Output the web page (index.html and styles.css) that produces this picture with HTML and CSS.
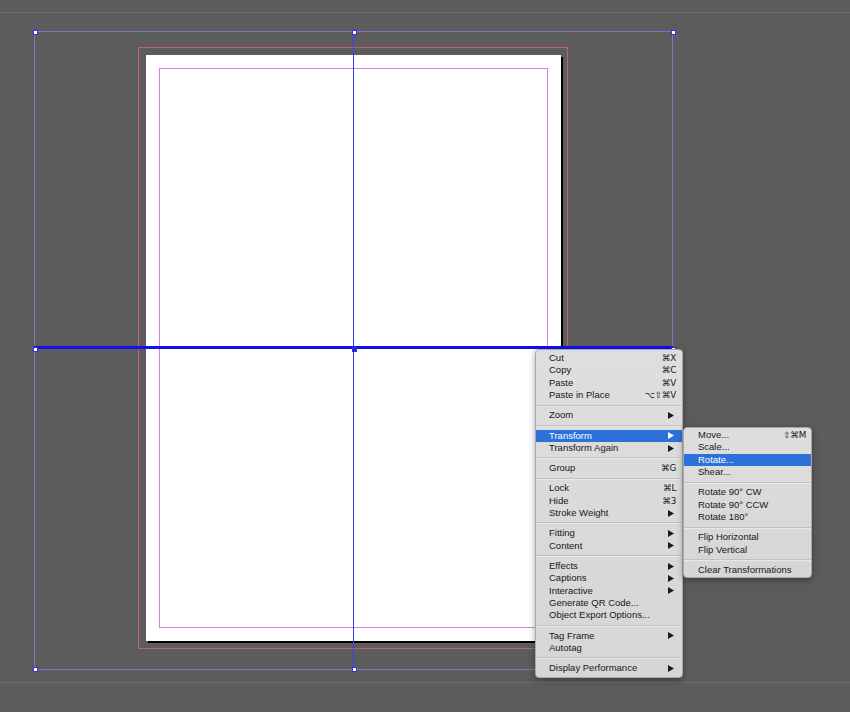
FILE: index.html
```html
<!DOCTYPE html>
<html>
<head>
<meta charset="utf-8">
<link rel="stylesheet" href="styles.css">
</head>
<body>
<div class="workspace">
  <div class="rule rule-top"></div>
  <div class="rule rule-bottom"></div>

  <div class="bleed"></div>
  <div class="page"></div>
  <div class="margins"></div>

  <div class="frame"></div>
  <div class="vline"></div>
  <div class="hline"></div>

  <div class="handle h-tl"></div>
  <div class="handle h-tc"></div>
  <div class="handle h-tr"></div>
  <div class="handle h-ml"></div>
  <div class="handle h-mc filled"></div>
  <div class="handle h-mr"></div>
  <div class="handle h-bl"></div>
  <div class="handle h-bc"></div>
  <div class="handle h-br"></div>

  <div class="menu main-menu">
    <div class="item"><span>Cut</span><span class="key">⌘X</span></div>
    <div class="item"><span>Copy</span><span class="key">⌘C</span></div>
    <div class="item"><span>Paste</span><span class="key">⌘V</span></div>
    <div class="item"><span>Paste in Place</span><span class="key">⌥⇧⌘V</span></div>
    <div class="sep"></div>
    <div class="item"><span>Zoom</span><svg class="arrow" viewBox="0 0 6 7"><polygon points="0,0 6,3.5 0,7"/></svg></div>
    <div class="sep"></div>
    <div class="item active"><span>Transform</span><svg class="arrow" viewBox="0 0 6 7"><polygon points="0,0 6,3.5 0,7"/></svg></div>
    <div class="item"><span>Transform Again</span><svg class="arrow" viewBox="0 0 6 7"><polygon points="0,0 6,3.5 0,7"/></svg></div>
    <div class="sep"></div>
    <div class="item"><span>Group</span><span class="key">⌘G</span></div>
    <div class="sep"></div>
    <div class="item"><span>Lock</span><span class="key">⌘L</span></div>
    <div class="item"><span>Hide</span><span class="key">⌘3</span></div>
    <div class="item"><span>Stroke Weight</span><svg class="arrow" viewBox="0 0 6 7"><polygon points="0,0 6,3.5 0,7"/></svg></div>
    <div class="sep"></div>
    <div class="item"><span>Fitting</span><svg class="arrow" viewBox="0 0 6 7"><polygon points="0,0 6,3.5 0,7"/></svg></div>
    <div class="item"><span>Content</span><svg class="arrow" viewBox="0 0 6 7"><polygon points="0,0 6,3.5 0,7"/></svg></div>
    <div class="sep"></div>
    <div class="item"><span>Effects</span><svg class="arrow" viewBox="0 0 6 7"><polygon points="0,0 6,3.5 0,7"/></svg></div>
    <div class="item"><span>Captions</span><svg class="arrow" viewBox="0 0 6 7"><polygon points="0,0 6,3.5 0,7"/></svg></div>
    <div class="item"><span>Interactive</span><svg class="arrow" viewBox="0 0 6 7"><polygon points="0,0 6,3.5 0,7"/></svg></div>
    <div class="item"><span>Generate QR Code...</span></div>
    <div class="item"><span>Object Export Options...</span></div>
    <div class="sep"></div>
    <div class="item"><span>Tag Frame</span><svg class="arrow" viewBox="0 0 6 7"><polygon points="0,0 6,3.5 0,7"/></svg></div>
    <div class="item"><span>Autotag</span></div>
    <div class="sep"></div>
    <div class="item"><span>Display Performance</span><svg class="arrow" viewBox="0 0 6 7"><polygon points="0,0 6,3.5 0,7"/></svg></div>
  </div>

  <div class="menu sub-menu">
    <div class="item"><span>Move...</span><span class="key">⇧⌘M</span></div>
    <div class="item"><span>Scale...</span></div>
    <div class="item active"><span>Rotate...</span></div>
    <div class="item"><span>Shear...</span></div>
    <div class="sep"></div>
    <div class="item"><span>Rotate 90° CW</span></div>
    <div class="item"><span>Rotate 90° CCW</span></div>
    <div class="item"><span>Rotate 180°</span></div>
    <div class="sep"></div>
    <div class="item"><span>Flip Horizontal</span></div>
    <div class="item"><span>Flip Vertical</span></div>
    <div class="sep"></div>
    <div class="item"><span>Clear Transformations</span></div>
  </div>
</div>
</body>
</html>
```

FILE: styles.css
```css
html, body {
  margin: 0;
  padding: 0;
}
body {
  background: #5c5c5c;
  width: 850px;
  height: 712px;
  overflow: hidden;
  font-family: "Liberation Sans", Arial, sans-serif;
}
.workspace {
  position: relative;
  width: 850px;
  height: 712px;
}
.rule {
  position: absolute;
  left: 0;
  width: 850px;
  height: 1px;
  background: #6c6c6c;
}
.rule-top { top: 12px; }
.rule-bottom { top: 682px; }

.bleed {
  position: absolute;
  left: 138px;
  top: 47px;
  width: 428px;
  height: 600px;
  border: 1px solid #c2606c;
}
.page {
  position: absolute;
  left: 146px;
  top: 55px;
  width: 415px;
  height: 586px;
  background: #ffffff;
  box-shadow: 2px 2px 0 #000;
}
.margins {
  position: absolute;
  left: 159px;
  top: 68px;
  width: 387px;
  height: 558px;
  border: 1px solid #d77ee6;
}
.frame {
  position: absolute;
  left: 34px;
  top: 31px;
  width: 637px;
  height: 637px;
  border: 1px solid #7a73cc;
}
.vline {
  position: absolute;
  left: 353px;
  top: 31px;
  width: 1px;
  height: 638px;
  background: #3c3cff;
}
.hline {
  position: absolute;
  left: 34px;
  top: 346px;
  width: 639px;
  height: 3px;
  background: #1010f0;
}
.handle {
  position: absolute;
  width: 3px;
  height: 3px;
  background: #fff;
  border: 1px solid #3a30e0;
  margin: -2px 0 0 -2px;
}
.handle.filled { background: #2020e0; }
.h-tl { left: 35px; top: 32px; }
.h-tc { left: 354px; top: 32px; }
.h-tr { left: 673px; top: 32px; }
.h-ml { left: 35px; top: 349px; }
.h-mc { left: 354px; top: 349px; }
.h-mr { left: 673px; top: 349px; }
.h-bl { left: 35px; top: 669px; }
.h-bc { left: 354px; top: 669px; }
.h-br { left: 673px; top: 669px; }

.menu {
  position: absolute;
  display: flex;
  flex-direction: column;
  background: linear-gradient(180deg, #dedede 0%, #d6d6d6 100%);
  border: 1px solid #a9a9a9;
  border-radius: 4px;
  box-shadow: 0 2px 6px rgba(0, 0, 0, 0.35);
  color: #171717;
  font-size: 9.5px;
  box-sizing: border-box;
}
.main-menu {
  left: 535px;
  top: 349px;
  width: 148px;
  padding: 2px 0 2px;
}
.sub-menu {
  left: 683px;
  top: 427px;
  width: 129px;
  padding: 1px 0 1px;
}
.item {
  flex: none;
  height: 12.4px;
  line-height: 12.4px;
  display: flex;
  align-items: center;
  justify-content: space-between;
  padding: 0 6px 0 13px;
  white-space: nowrap;
}
.sub-menu .item {
  padding: 0 5px 0 14px;
}
.item.active {
  background: #2c71d8;
  color: #fff;
}
.key {
  font-family: "DejaVu Sans", sans-serif;
  font-size: 8.8px;
  letter-spacing: -0.3px;
}
.arrow {
  width: 6px;
  height: 7px;
  margin-right: 2px;
  fill: #1b1b1b;
}
.item.active .arrow { fill: #fff; }
.sep {
  flex: none;
  height: 1px;
  background: #c2c2c2;
  border-bottom: 1px solid #e8e8e8;
  margin: 3px 0 2.8px;
}
```
